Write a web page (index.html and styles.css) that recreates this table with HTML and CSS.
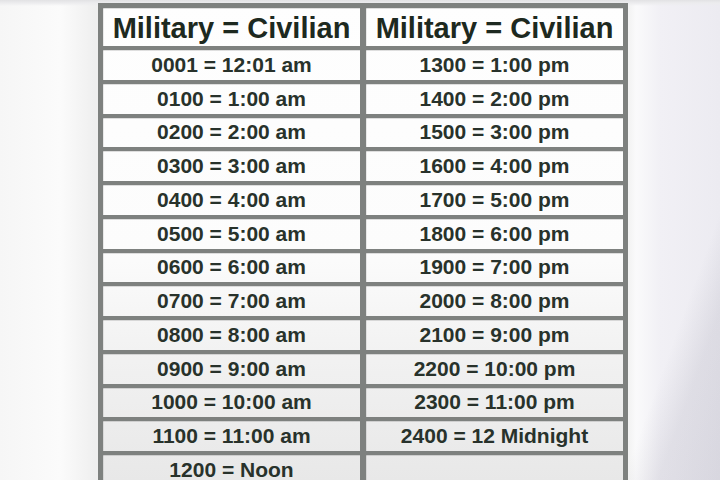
FILE: index.html
```html
<!DOCTYPE html>
<html lang="en">
<head>
<meta charset="utf-8">
<title>Military = Civilian</title>
<link rel="stylesheet" href="styles.css">
</head>
<body>
<div class="page">
  <div class="chart">
    <div class="cell head">Military = Civilian</div>
    <div class="cell head">Military = Civilian</div>
    <div class="cell">0001 = 12:01 am</div>
    <div class="cell">1300 = 1:00 pm</div>
    <div class="cell">0100 = 1:00 am</div>
    <div class="cell">1400 = 2:00 pm</div>
    <div class="cell">0200 = 2:00 am</div>
    <div class="cell">1500 = 3:00 pm</div>
    <div class="cell">0300 = 3:00 am</div>
    <div class="cell">1600 = 4:00 pm</div>
    <div class="cell">0400 = 4:00 am</div>
    <div class="cell">1700 = 5:00 pm</div>
    <div class="cell">0500 = 5:00 am</div>
    <div class="cell">1800 = 6:00 pm</div>
    <div class="cell">0600 = 6:00 am</div>
    <div class="cell">1900 = 7:00 pm</div>
    <div class="cell">0700 = 7:00 am</div>
    <div class="cell">2000 = 8:00 pm</div>
    <div class="cell">0800 = 8:00 am</div>
    <div class="cell">2100 = 9:00 pm</div>
    <div class="cell">0900 = 9:00 am</div>
    <div class="cell">2200 = 10:00 pm</div>
    <div class="cell">1000 = 10:00 am</div>
    <div class="cell">2300 = 11:00 pm</div>
    <div class="cell">1100 = 11:00 am</div>
    <div class="cell">2400 = 12 Midnight</div>
    <div class="cell">1200 = Noon</div>
    <div class="cell"></div>
  </div>
</div>
</body>
</html>
```
FILE: styles.css
```css
html, body {
  margin: 0;
  padding: 0;
}

body {
  width: 720px;
  height: 480px;
  overflow: hidden;
  font-family: "Liberation Sans", Arial, sans-serif;
  background:
    linear-gradient(180deg, #e2e2e4 0, #ececee 3px, rgba(255,255,255,0) 6px),
    linear-gradient(90deg, #f6f6f6 0, #fbfbfb 60px, #efefef 95px, #f4f4f4 630px, #fafafb 636px, #f1f0f5 660px, #ecebf1 720px);
}

.page {
  height: 480px;
  background: linear-gradient(110deg, rgba(0,0,0,0) 0, rgba(0,0,0,0) 89%, rgba(110,108,130,0.12) 93%, rgba(110,108,130,0.16) 100%);
}

.chart {
  margin-left: 98px;
  margin-top: 3px;
  width: 530px;
  box-sizing: border-box;
  padding: 5px 5px 0 5px;
  background: #7e817f;
  display: grid;
  grid-template-columns: 1fr 1fr;
  grid-template-rows: 38px;
  grid-auto-rows: 29.75px;
  column-gap: 6px;
  row-gap: 4px;
}

.cell {
  display: flex;
  align-items: center;
  justify-content: center;
  font-weight: 700;
  font-size: 21px;
  color: #28322b;
  background: linear-gradient(180deg, #fefefe 0, #fcfcfc 250px, #f1f1f1 360px, #e8e8e8 480px) fixed;
  box-shadow: inset 0 1px 0 rgba(0,0,0,0.12), inset 1px 0 0 rgba(0,0,0,0.08);
  white-space: nowrap;
}

.head {
  font-size: 29px;
  color: #1d2920;
  padding-top: 2px;
}
```
